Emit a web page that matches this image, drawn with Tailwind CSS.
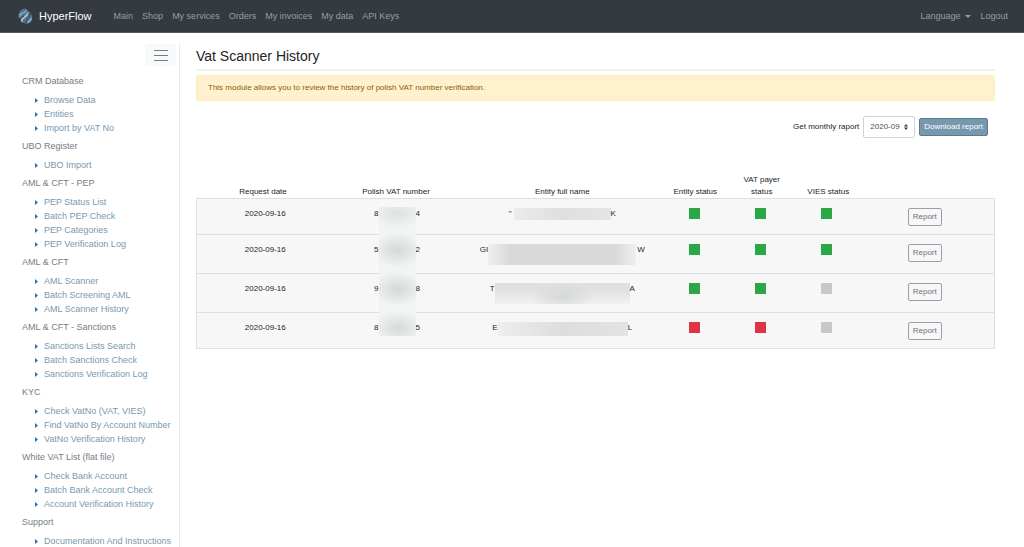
<!DOCTYPE html>
<html lang="en">
<head>
  <meta charset="UTF-8">
  <meta name="viewport" content="width=device-width, initial-scale=1.0">
  <title>HyperFlow - Vat Scanner History</title>
  <script src="https://cdn.jsdelivr.net/npm/@tailwindcss/browser@4"></script>
</head>
<body class="bg-white text-[#212529] font-['Liberation_Sans',Arial,sans-serif]">
  <!-- Marker shared by all sidebar lists -->
  <svg class="hidden">
    <symbol id="marker" viewBox="0 0 3 5"><path d="M0 0 3 2.5 0 5z" fill="#2176bd"/></symbol>
  </svg>

  <!-- Top navigation -->
  <nav class="flex h-[33px] items-center border-b border-[#50575e] bg-[#343a40] pl-[18px] pr-4 text-[9px] leading-4 text-[#9a9da0]">
    <a href="#" class="flex items-center gap-[6px] text-[11px] text-white">
      <svg class="h-4 w-[15px]" viewBox="0 0 15 16">
        <path d="M7 0.500C3 1 0 4 1 8c1 5 4 7.500 8 7.500 4-1 6-4 5-8C13 5 12 4 10 3 9 2 9 1 7 .5z" fill="#4f7389"/>
        <path d="M8 1c1 3-1 4-3 5-2 1-3 2-4 4C0 8 1 6 3 5c2-1 4-1 5-4z" fill="#86a8bb"/>
        <path d="M10 3c1 4-1 5-3 7-2 1-3 2-2 4.500C3 14 2 12 4 10c2-2 5-3 6-7z" fill="#a9c4d3"/>
        <path d="M6 8C4 9 2 10 2 13M12 5c1 4-4 5-4 10" fill="none" stroke="#343a40" stroke-width="1"/>
        <path d="M14 9c0 4-2 6-5 6.500C9 12 12 12 14 9z" fill="#86a8bb"/>
      </svg>
      HyperFlow
    </a>
    <div class="ml-[22px] flex gap-[9px]">
      <a href="#">Main</a>
      <a href="#">Shop</a>
      <a href="#">My services</a>
      <a href="#">Orders</a>
      <a href="#">My invoices</a>
      <a href="#">My data</a>
      <a href="#">API Keys</a>
    </div>
    <div class="ml-auto flex items-center gap-[9px]">
      <button type="button" class="flex items-center gap-[5px]">
        Language
        <svg class="h-[3px] w-[6px]" viewBox="0 0 6 3"><path d="M0 0h6L3 3z" fill="currentColor"/></svg>
      </button>
      <a href="#">Logout</a>
    </div>
  </nav>

  <div class="flex">
    <!-- Sidebar -->
    <aside class="mt-[9px] w-[180px] shrink-0 border-r border-[#ececee] pr-[3px] pt-[2px] text-[9px] leading-[14px] text-[#757d85]">
      <div class="mb-2 flex justify-end">
        <button type="button" aria-label="Toggle menu" class="flex h-[22px] w-[31px] items-center justify-center rounded-xs bg-[#f8f9fa]">
          <svg class="h-3 w-[14px]" viewBox="0 0 14 12" stroke="#7b7c7d"><path d="M0 1.500h14M0 6.500h14M0 11.500h14"/></svg>
        </button>
      </div>
      <div class="whitespace-nowrap pl-[22px] [&_ul]:mt-[5px] [&_ul]:mb-1 [&_ul]:pl-[13px] [&_li]:flex [&_li]:items-center [&_li]:gap-[6px] [&_svg]:h-[5px] [&_svg]:w-[3px] [&_a]:text-[#7799b1]">
        <h2>CRM Database</h2>
        <ul>
          <li><svg><use href="#marker"/></svg><a href="#">Browse Data</a></li>
          <li><svg><use href="#marker"/></svg><a href="#">Entities</a></li>
          <li><svg><use href="#marker"/></svg><a href="#">Import by VAT No</a></li>
        </ul>
        <h2>UBO Register</h2>
        <ul>
          <li><svg><use href="#marker"/></svg><a href="#">UBO Import</a></li>
        </ul>
        <h2>AML &amp; CFT - PEP</h2>
        <ul>
          <li><svg><use href="#marker"/></svg><a href="#">PEP Status List</a></li>
          <li><svg><use href="#marker"/></svg><a href="#">Batch PEP Check</a></li>
          <li><svg><use href="#marker"/></svg><a href="#">PEP Categories</a></li>
          <li><svg><use href="#marker"/></svg><a href="#">PEP Verification Log</a></li>
        </ul>
        <h2>AML &amp; CFT</h2>
        <ul>
          <li><svg><use href="#marker"/></svg><a href="#">AML Scanner</a></li>
          <li><svg><use href="#marker"/></svg><a href="#">Batch Screening AML</a></li>
          <li><svg><use href="#marker"/></svg><a href="#">AML Scanner History</a></li>
        </ul>
        <h2>AML &amp; CFT - Sanctions</h2>
        <ul>
          <li><svg><use href="#marker"/></svg><a href="#">Sanctions Lists Search</a></li>
          <li><svg><use href="#marker"/></svg><a href="#">Batch Sanctions Check</a></li>
          <li><svg><use href="#marker"/></svg><a href="#">Sanctions Verification Log</a></li>
        </ul>
        <h2>KYC</h2>
        <ul>
          <li><svg><use href="#marker"/></svg><a href="#">Check VatNo (VAT, VIES)</a></li>
          <li><svg><use href="#marker"/></svg><a href="#">Find VatNo By Account Number</a></li>
          <li><svg><use href="#marker"/></svg><a href="#">VatNo Verification History</a></li>
        </ul>
        <h2>White VAT List (flat file)</h2>
        <ul>
          <li><svg><use href="#marker"/></svg><a href="#">Check Bank Account</a></li>
          <li><svg><use href="#marker"/></svg><a href="#">Batch Bank Account Check</a></li>
          <li><svg><use href="#marker"/></svg><a href="#">Account Verification History</a></li>
        </ul>
        <h2>Support</h2>
        <ul>
          <li><svg><use href="#marker"/></svg><a href="#">Documentation And Instructions</a></li>
        </ul>
      </div>
    </aside>

    <!-- Content -->
    <main class="min-w-0 flex-1 pl-4 pr-[29px] pt-[13px] text-[8px] leading-3">
      <h1 class="border-b-2 border-[#f1f1f2] pb-[3px] text-[14px] leading-5">Vat Scanner History</h1>
      <div class="mt-1 rounded-xs border border-[#ffeeba] bg-[#fff1cd] px-[11px] py-[6px] text-[#856404]">
        This module allows you to review the history of polish VAT number verification.
      </div>

      <form class="mt-[15px] flex items-center justify-end pr-[7px]">
        <label for="month">Get monthly raport</label>
        <div class="relative ml-1">
          <select id="month" class="h-[22px] w-[52px] appearance-none rounded-xs border border-[#ced4da] bg-white pl-[6px] text-[#495057]">
            <option>2020-09</option>
          </select>
          <svg class="pointer-events-none absolute right-[7px] top-2 h-[6px] w-1" viewBox="0 0 4 6"><path d="M2 0 4 2.500H0zM2 6 0 3.500h4z" fill="#343a40"/></svg>
        </div>
        <button type="button" class="ml-1 h-[18px] rounded-xs border border-[#5d7a8f] bg-[#7799ad] px-1 text-white">Download report</button>
      </form>

      <table class="mt-9 w-full table-fixed border-collapse text-center [&_th]:font-normal [&_th]:align-bottom [&_td]:pt-[9px] [&_td]:align-top [&_tbody_tr]:border [&_tbody_tr]:border-[#dfdfdf] [&_tbody_tr]:bg-[#f7f7f7]">
        <colgroup>
          <col class="w-2/12"><col class="w-2/12"><col class="w-3/12">
          <col class="w-1/12"><col class="w-1/12"><col class="w-1/12"><col class="w-2/12">
        </colgroup>
        <thead>
          <tr>
            <th>Request date</th>
            <th>Polish VAT number</th>
            <th>Entity full name</th>
            <th>Entity status</th>
            <th class="px-3">VAT payer status</th>
            <th>VIES status</th>
            <th aria-label="Actions"></th>
          </tr>
        </thead>
        <tbody>
          <tr class="h-9">
            <td class="pl-1">2020-09-16</td>
            <td class="relative pl-[2px]">
              <div class="flex justify-center gap-[37px]"><span>8</span><span>4</span></div>
              <!-- One mask covers the numbers of all four rows -->
              <div class="absolute left-1/2 top-2 ml-[-17px] h-[129px] w-[37px] bg-[#f2f3f3] bg-[radial-gradient(26px_15px_at_50%_6px,#dfe1e1,transparent),radial-gradient(26px_17px_at_50%_43px,#d6d8d8,transparent),radial-gradient(26px_17px_at_50%_82px,#d6d8d8,transparent),radial-gradient(26px_17px_at_50%_121px,#d8dada,transparent)]"></div>
            </td>
            <td><div class="flex items-start justify-center"><span>"</span><span class="ml-[2px] h-3 w-[97px] bg-linear-to-r from-[#ebebeb] via-[#dedfdf] to-[#e4e5e5]"></span><span>K</span></div></td>
            <td class="pr-[2px]"><span role="img" aria-label="Active" class="inline-block size-[11px] bg-[#2ba745]"></span></td>
            <td class="pr-[2px]"><span role="img" aria-label="Active" class="inline-block size-[11px] bg-[#2ba745]"></span></td>
            <td class="pr-[4px]"><span role="img" aria-label="Active" class="inline-block size-[11px] bg-[#2ba745]"></span></td>
            <td class="pr-[6px]"><button type="button" class="h-[18px] w-[34px] rounded-xs border border-[#9aa0a6] text-[#6c757d]">Report</button></td>
          </tr>
          <tr class="h-[39px]">
            <td class="pl-1">2020-09-16</td>
            <td class="pl-[2px]"><div class="flex justify-center gap-[37px]"><span>5</span><span>2</span></div></td>
            <td><div class="flex items-start justify-center"><span>GI</span><span class="h-[21px] w-[148px] bg-[linear-gradient(to_right,#efefef,#d8d9d9_15%,#d8d9d9_85%,#efefef)]"></span><span class="ml-[1px]">W</span></div></td>
            <td class="pr-[2px]"><span role="img" aria-label="Active" class="inline-block size-[11px] bg-[#2ba745]"></span></td>
            <td class="pr-[2px]"><span role="img" aria-label="Active" class="inline-block size-[11px] bg-[#2ba745]"></span></td>
            <td class="pr-[4px]"><span role="img" aria-label="Active" class="inline-block size-[11px] bg-[#2ba745]"></span></td>
            <td class="pr-[6px]"><button type="button" class="h-[18px] w-[34px] rounded-xs border border-[#9aa0a6] text-[#6c757d]">Report</button></td>
          </tr>
          <tr class="h-[39px]">
            <td class="pl-1">2020-09-16</td>
            <td class="pl-[2px]"><div class="flex justify-center gap-[37px]"><span>9</span><span>8</span></div></td>
            <td><div class="flex items-start justify-center"><span>T</span><span class="h-[21px] w-[135px] bg-[#f1f1f1] bg-[radial-gradient(32px_14px_at_50%_14px,#d6d7d7,transparent),linear-gradient(#dfe0e0_30%,transparent)]"></span><span>A</span></div></td>
            <td class="pr-[2px]"><span role="img" aria-label="Active" class="inline-block size-[11px] bg-[#2ba745]"></span></td>
            <td class="pr-[2px]"><span role="img" aria-label="Active" class="inline-block size-[11px] bg-[#2ba745]"></span></td>
            <td class="pr-[4px]"><span role="img" aria-label="Unknown" class="inline-block size-[11px] bg-[#c8c8c8]"></span></td>
            <td class="pr-[6px]"><button type="button" class="h-[18px] w-[34px] rounded-xs border border-[#9aa0a6] text-[#6c757d]">Report</button></td>
          </tr>
          <tr class="h-9">
            <td class="pl-1">2020-09-16</td>
            <td class="pl-[2px]"><div class="flex justify-center gap-[37px]"><span>8</span><span>5</span></div></td>
            <td><div class="flex items-start justify-center"><span>E</span><span class="h-[14px] w-[130px] bg-linear-to-r from-[#eeeeee] via-[#dcdddd] to-[#e2e3e3]"></span><span>L</span></div></td>
            <td class="pr-[2px]"><span role="img" aria-label="Inactive" class="inline-block size-[11px] bg-[#dc3545]"></span></td>
            <td class="pr-[2px]"><span role="img" aria-label="Inactive" class="inline-block size-[11px] bg-[#dc3545]"></span></td>
            <td class="pr-[4px]"><span role="img" aria-label="Unknown" class="inline-block size-[11px] bg-[#c8c8c8]"></span></td>
            <td class="pr-[6px]"><button type="button" class="h-[18px] w-[34px] rounded-xs border border-[#9aa0a6] text-[#6c757d]">Report</button></td>
          </tr>
        </tbody>
      </table>
    </main>
  </div>
</body>
</html>
